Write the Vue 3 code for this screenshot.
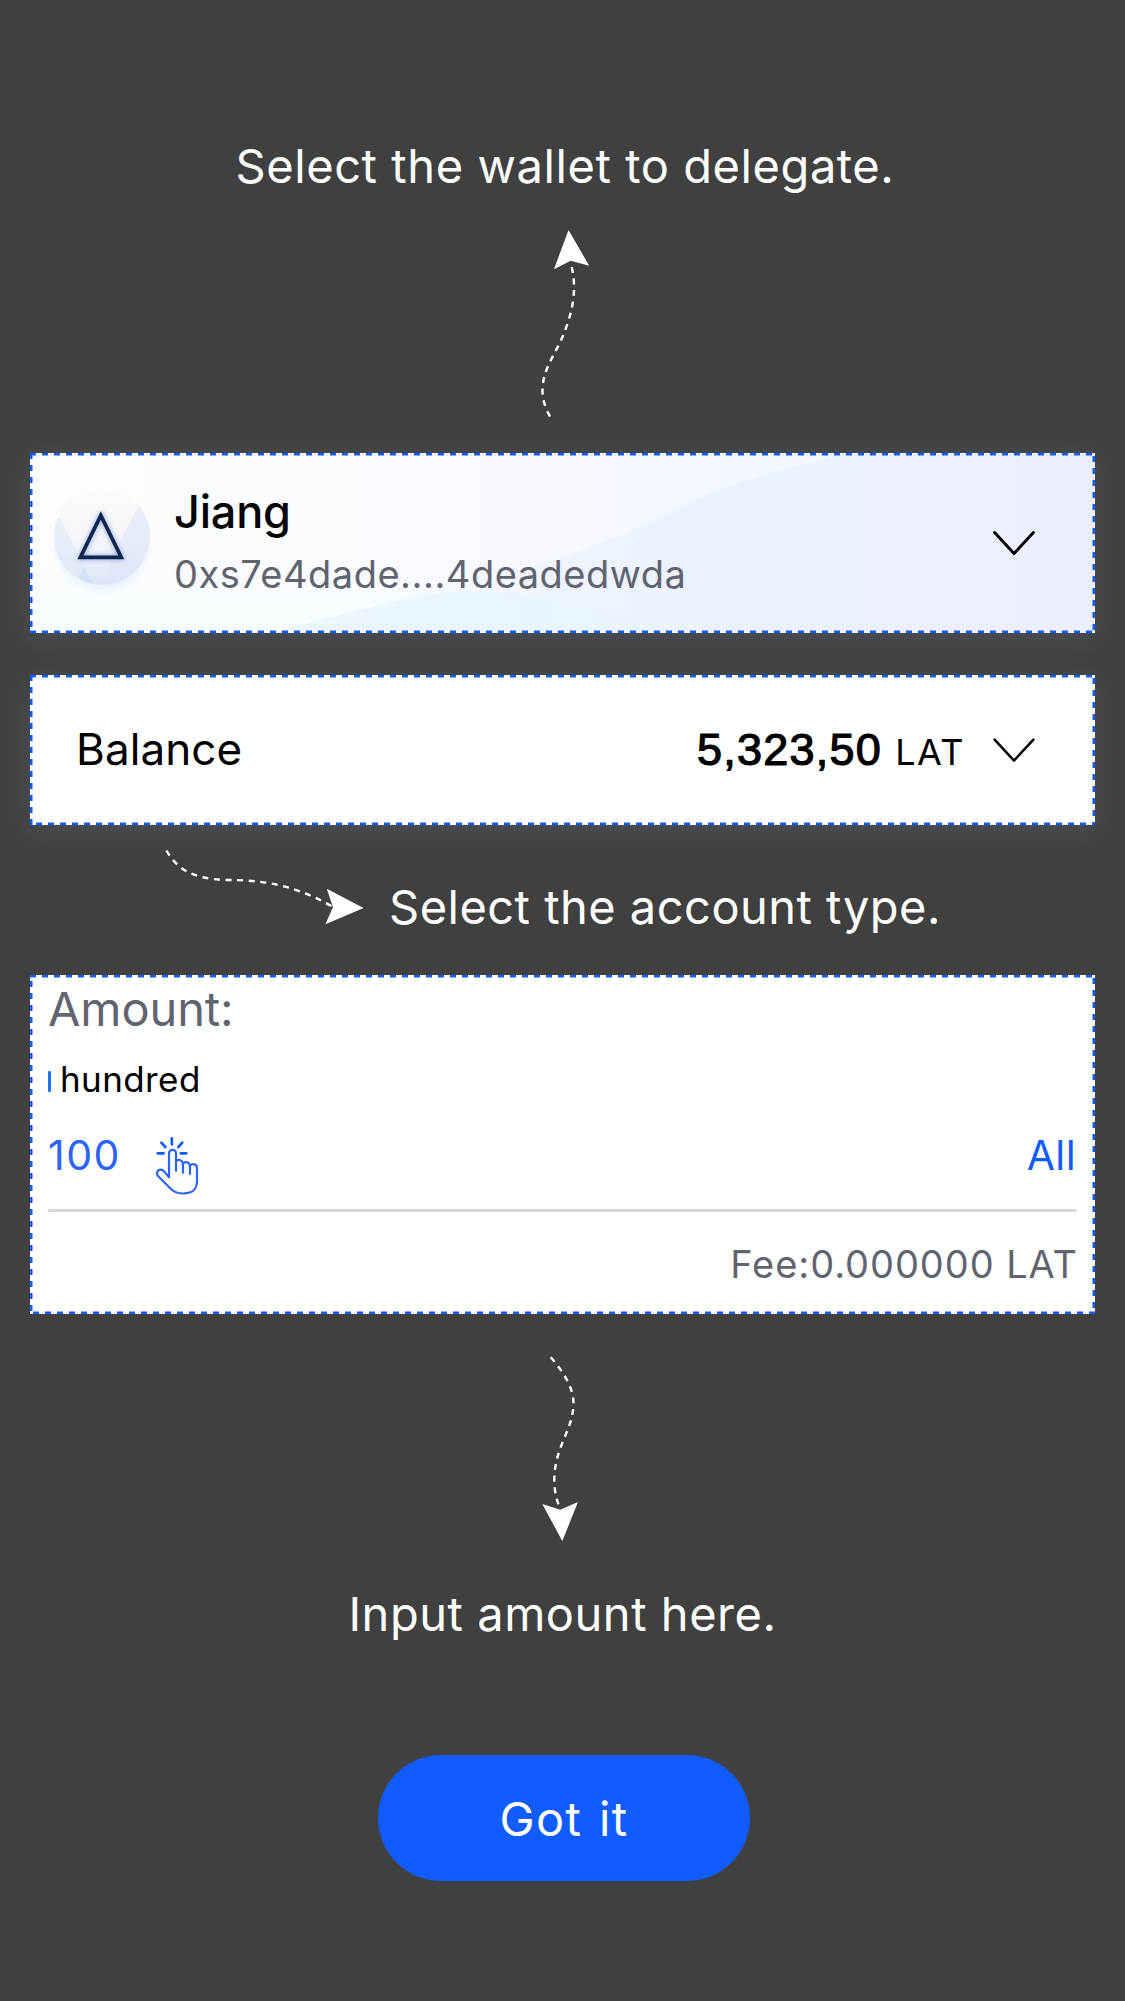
<script setup>
const wallet = { name: 'Jiang', address: '0xs7e4dade....4deadedwda' }
const balance = { value: '5,323,50', unit: 'LAT' }
const chevron = 'M1.6 1.6 L21 22.6 L40.4 1.6'
</script>

<template>
  <main class="guide">
    <p class="hint hint-wallet">Select the wallet to delegate.</p>
    <svg class="arrow arrow-up" width="60" height="196" viewBox="535 226 60 196">
      <path class="trail" d="M550 416.5 C546 409 542.5 401 542.5 391 C542.5 366 558 353 567 325 C575 302 576 284 571 264" />
      <path class="head" d="M568.5 230 L589.2 265.7 L570.7 260.7 L554 269.2 Z" />
    </svg>

    <section class="card wallet-card">
      <svg class="waves" width="1065" height="180" viewBox="0 0 1065 180">
        <defs>
          <linearGradient id="base" x1="0" x2="1" y1="0" y2="0">
            <stop offset="0" stop-color="#fcfdff" />
            <stop offset="0.3" stop-color="#fafbff" />
            <stop offset="0.6" stop-color="#f4f8ff" />
            <stop offset="0.8" stop-color="#f1f5ff" />
          </linearGradient>
          <linearGradient id="hill" x1="0" x2="1" y1="0" y2="0">
            <stop offset="0" stop-color="#f1f6ff" stop-opacity="0" />
            <stop offset="0.3" stop-color="#edf3ff" />
            <stop offset="0.5" stop-color="#ebf2ff" />
            <stop offset="0.72" stop-color="#ecf0ff" />
            <stop offset="1" stop-color="#ebeefe" />
          </linearGradient>
          <linearGradient id="mist" x1="0" x2="0" y1="0" y2="1">
            <stop offset="0" stop-color="#f7fcff" stop-opacity="0.3" />
            <stop offset="0.6" stop-color="#f7fcff" />
          </linearGradient>
          <linearGradient id="pool" x1="0" x2="1" y1="0" y2="0">
            <stop offset="0" stop-color="#ecf6ff" />
            <stop offset="0.65" stop-color="#e8f5ff" />
            <stop offset="1" stop-color="#eaf3ff" />
          </linearGradient>
        </defs>
        <rect width="1065" height="180" fill="url(#base)" />
        <path d="M0 116 C120 102 260 116 440 136 V180 H0 Z" fill="url(#mist)" />
        <path d="M330 150 C400 138 480 121 531 105 C580 88 612 74 640 60 C692 33 750 15 829 0 H1065 V180 H330 Z" fill="url(#hill)" />
        <path d="M240 180 C330 157 400 138 440 138 C500 140 575 154 650 180 Z" fill="url(#pool)" />
      </svg>
      <svg class="avatar" width="120" height="120" viewBox="36 18 360 360">
        <defs>
          <linearGradient id="disc" x1="0.4" x2="0.5" y1="0" y2="1">
            <stop offset="0.15" stop-color="#fbfaf9" />
            <stop offset="0.6" stop-color="#f1f4fa" />
            <stop offset="1" stop-color="#dbe5f8" />
          </linearGradient>
          <clipPath id="round"><circle cx="216" cy="200" r="144" /></clipPath>
          <filter id="soft" x="-30%" y="-30%" width="160%" height="160%"><feGaussianBlur stdDeviation="12" /></filter>
          <filter id="glow" x="-40%" y="-40%" width="180%" height="180%"><feGaussianBlur stdDeviation="8" /></filter>
        </defs>
        <circle cx="216" cy="216" r="138" fill="#dce6fa" opacity="0.7" filter="url(#soft)" />
        <g clip-path="url(#round)">
          <rect x="60" y="50" width="320" height="300" fill="url(#disc)" />
          <path d="M90 145 L190 345 H60 V145 Z" fill="#dfe7f6" opacity="0.6" />
          <path d="M325 108 L225 306 H308 L330 350 H380 V108 Z" fill="#dde6f6" opacity="0.6" />
          <path d="M163 290 L192 345 H136 Z" fill="#cbdaf5" opacity="0.6" />
        </g>
        <path d="M212.500 136 L152 263 H274 Z" class="delta-glow" filter="url(#glow)" />
        <path d="M212.500 136 L151 262 H274 Z" class="delta" />
      </svg>
      <div class="who">
        <span class="name">{{ wallet.name }}</span>
        <span class="address">{{ wallet.address }}</span>
      </div>
      <svg class="chevron" width="42" height="25" viewBox="0 0 42 25"><path :d="chevron" /></svg>
      <svg class="frame" width="1065" height="180"><rect width="1065" height="180" /></svg>
    </section>

    <section class="card balance-card">
      <span class="label">Balance</span>
      <div class="sum">
        <span class="value">{{ balance.value }}</span>
        <span class="unit">{{ balance.unit }}</span>
      </div>
      <svg class="chevron thin" width="42" height="25" viewBox="0 0 42 25"><path :d="chevron" /></svg>
      <svg class="frame" width="1065" height="150"><rect width="1065" height="150" /></svg>
    </section>

    <div class="account-hint">
      <svg class="arrow" width="210" height="90" viewBox="160 845 210 90">
        <path class="trail" d="M166.400 850.500 C176 867 190 879 226 880 C258 880 292 883 333 907" />
        <path class="head" d="M363.600 908 L325.400 924.300 L332.900 907.300 L326.800 888.700 Z" />
      </svg>
      <p class="hint">Select the account type.</p>
    </div>

    <section class="card amount-card">
      <span class="amount-label">Amount:</span>
      <div class="entry">
        <i class="caret"></i>
        <span class="words">hundred</span>
      </div>
      <div class="choices">
        <span class="hundred">100</span>
        <svg class="tap" width="43" height="58" viewBox="48 50 129 174">
          <path class="rays" d="M95.500 54 V72 M64 67 L76 80 M127 67 L115 80 M53 99 H71 M122 99 H139" />
          <path d="M108 151 V99 A10.500 10.500 0 0 0 87 99 V171 L73 154 C62 141 44 153 54 167 L93 206 C103 216 112 219.500 130 219.500 C159 219.500 171 208 171 180 V143 C171 131 156 128 150 137 C148 124 135 122 129 131 C127 117 113 115 108 124 M129 129 V157 M150 135 V161" />
        </svg>
        <span class="all">All</span>
      </div>
      <span class="fee">Fee:0.000000 LAT</span>
      <svg class="frame" width="1065" height="339"><rect width="1065" height="339" /></svg>
    </section>

    <svg class="arrow arrow-down" width="60" height="196" viewBox="530 1350 60 196">
      <path class="trail" d="M550.700 1357.300 C562 1370 573.500 1387 573.500 1403 C573.500 1430 554.500 1446 554.300 1480 C554.300 1489 556 1498 559 1506" />
      <path class="head" d="M562.300 1541 L542.300 1504 L560.300 1509.700 L578 1502 Z" />
    </svg>
    <p class="hint hint-input">Input amount here.</p>
    <button class="confirm" type="button">Got it</button>
  </main>
</template>

<style>
body {
  margin: 0;
  background: #404040;
}
</style>

<style scoped>
.guide {
  display: flex;
  flex-direction: column;
  box-sizing: border-box;
  width: 1125px;
  height: 2001px;
  padding: 136px 30px 0;
  background: #404040;
  font-family: Inter, "Noto Sans", sans-serif;
  color: #000;
}

.hint {
  margin: 0;
  font-size: 47px;
  line-height: 60px;
  color: #fff;
  text-align: center;
  white-space: nowrap;
}

.hint-wallet {
  padding-left: 5px;
  letter-spacing: 0.58px;
}

.hint-input {
  margin-top: 38px;
  letter-spacing: 0.53px;
}

.arrow {
  display: block;
  flex: none;
}

.arrow-up {
  margin: 30px 0 31px 505px;
}

.arrow-down {
  margin: 36px 0 0 500px;
}

.trail {
  fill: none;
  stroke: #fff;
  stroke-width: 2.400;
  stroke-dasharray: 6 5.600;
}

.head {
  fill: #fff;
}

.card {
  position: relative;
  display: flex;
  flex: none;
  box-sizing: border-box;
  background: #fff;
}

.wallet-card,
.balance-card {
  box-shadow: 0 6px 30px rgba(155, 170, 210, 0.16);
}

.wallet-card {
  align-items: flex-start;
  height: 180px;
}

.waves {
  position: absolute;
  inset: 0;
}

.frame {
  position: absolute;
  inset: 0;
  overflow: hidden;
  pointer-events: none;
}

.frame rect {
  fill: none;
  stroke: #105cfe;
  stroke-width: 5;
  stroke-dasharray: 6;
}

.avatar {
  position: relative;
  margin: 23px 0 0 12px;
}

.delta,
.delta-glow {
  fill: none;
  stroke: #0e2550;
  stroke-width: 11;
}

.delta-glow {
  stroke: #5f7fc4;
  stroke-width: 14;
  opacity: 0.6;
}

.who {
  position: relative;
  display: flex;
  flex-direction: column;
  gap: 11px;
  margin: 31px 0 0 12px;
}

.name {
  font-size: 45px;
  line-height: 56px;
  font-weight: 500;
  letter-spacing: -0.2px;
}

.address {
  font-size: 38px;
  line-height: 46px;
  letter-spacing: 0.5px;
  color: #61646e;
}

.chevron {
  position: relative;
  flex: none;
  align-self: center;
  margin: 0 60px 0 auto;
  fill: none;
  stroke: #000;
  stroke-width: 2.900;
  stroke-linecap: round;
  stroke-linejoin: round;
}

.chevron.thin {
  margin-left: 28px;
  stroke-width: 2.500;
}

.balance-card {
  align-items: center;
  height: 150px;
  margin-top: 42px;
  padding-left: 46px;
}

.label {
  margin-bottom: 2px;
  font-size: 44px;
  line-height: 60px;
  letter-spacing: 0.1px;
}

.sum {
  display: flex;
  align-items: baseline;
  gap: 13px;
  margin: 1px 0 0 auto;
  line-height: 60px;
}

.value {
  font-family: "Liberation Sans", Arial, sans-serif;
  font-size: 45px;
  letter-spacing: 1.25px;
  -webkit-text-stroke: 1.200px #000;
}

.unit {
  font-size: 36px;
  font-weight: 400;
  letter-spacing: 1.5px;
}

.account-hint {
  display: flex;
  align-items: flex-start;
  gap: 19px;
  height: 130px;
  padding: 20px 0 0 130px;
}

.account-hint .hint {
  margin-top: 32px;
  letter-spacing: 0.48px;
}

.amount-card {
  flex-direction: column;
  height: 339px;
  padding: 4px 18px 0;
}

.amount-label {
  font-size: 47px;
  line-height: 60px;
  letter-spacing: -0.1px;
  color: #61646e;
}

.entry {
  display: flex;
  align-items: flex-start;
  gap: 9px;
  margin-top: 18px;
}

.caret {
  width: 3px;
  height: 21px;
  margin-top: 14px;
  border-radius: 1px;
  background: #1f74ff;
}

.words {
  font-size: 35px;
  line-height: 44px;
  letter-spacing: 0.4px;
}

.choices {
  display: flex;
  align-items: flex-start;
  position: relative;
  height: 79px;
  margin-top: 29px;
  font-size: 41px;
  line-height: 50px;
}

.choices::after {
  content: "";
  position: absolute;
  left: 0;
  right: 0;
  top: 79px;
  height: 3px;
  border-radius: 2px;
  background: #d5d8df;
}

.hundred {
  width: 108px;
  letter-spacing: 1.5px;
  color: #2b63ff;
}

.tap {
  margin-top: 7px;
  fill: none;
  stroke: #2b63ff;
  stroke-width: 6.600;
  stroke-linecap: round;
  stroke-linejoin: round;
}

.tap .rays {
  stroke: #105cfe;
  stroke-width: 8;
}

.all {
  margin: 0 1px 0 auto;
  letter-spacing: 0.4px;
  color: #105cfe;
}

.fee {
  align-self: flex-end;
  margin: 32px -1px 0 0;
  font-size: 38px;
  line-height: 46px;
  letter-spacing: 0.94px;
  color: #61646e;
}

.confirm {
  flex: none;
  width: 372px;
  height: 126px;
  margin: 111px 0 0 348px;
  padding: 0;
  border: 0;
  border-radius: 63px;
  background: #105cfe;
  color: #fff;
  font-family: inherit;
  font-size: 47px;
  font-weight: 400;
  letter-spacing: 1.4px;
  word-spacing: 2px;
}
</style>
